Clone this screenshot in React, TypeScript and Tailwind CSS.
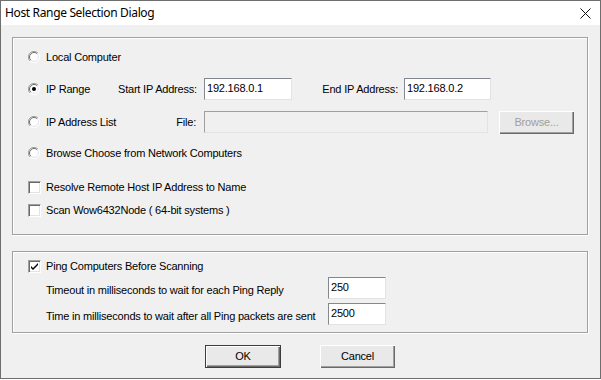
import React from "react"

function Radio({ checked = false }: { checked?: boolean }) {
  return (
    <svg width="12" height="12" viewBox="0 0 12 12" className="shrink-0">
      <circle cx="6" cy="6" r="5.5" fill="#ffffff" />
      <path d="M10 2 A5.5 5.5 0 0 0 2 10" stroke="#a0a0a0" strokeWidth="1" fill="none" />
      <path d="M2 10 A5.5 5.5 0 0 0 10 2" stroke="#ffffff" strokeWidth="1" fill="none" />
      <path d="M9.2 2.8 A4.5 4.5 0 0 0 2.8 9.2" stroke="#696969" strokeWidth="1" fill="none" />
      <path d="M2.8 9.2 A4.5 4.5 0 0 0 9.2 2.8" stroke="#e3e3e3" strokeWidth="1" fill="none" />
      {checked && <circle cx="6" cy="6" r="2" fill="#000000" />}
    </svg>
  )
}

function Check({ checked = false }: { checked?: boolean }) {
  return (
    <div className="w-[13px] h-[13px] shrink-0 bg-white border-t border-l border-[#a0a0a0] border-b border-r border-b-white border-r-white shadow-[inset_1px_1px_0_#696969,inset_-1px_-1px_0_#e3e3e3] flex items-center justify-center">
      {checked && (
        <svg width="9" height="9" viewBox="0 0 9 9">
          <path d="M1 4 L3 6 L8 1 L8 3 L3 8 L1 6 Z" fill="#000000" />
        </svg>
      )}
    </div>
  )
}

function Field({ value, className }: { value?: string; className: string }) {
  return (
    <div
      className={`h-[22px] bg-white border-t border-l border-[#828790] border-b border-r border-b-[#e3e3e3] border-r-[#e3e3e3] pl-[2px] pt-[2px] leading-[14px] ${className}`}
    >
      {value}
    </div>
  )
}

function Button({ label, primary = false, disabled = false, className = "" }: { label: string; primary?: boolean; disabled?: boolean; className?: string }) {
  return (
    <div
      className={`h-[23px] w-[75px] bg-[#e9e9e9] flex items-center justify-center ${
        primary
          ? "border border-[#3c3c3c] shadow-[inset_1px_1px_0_#ffffff,inset_-1px_-1px_0_#696969,inset_-2px_-2px_0_#a0a0a0]"
          : "shadow-[inset_1px_1px_0_#ffffff,inset_-1px_-1px_0_#696969,inset_-2px_-2px_0_#a0a0a0]"
      } ${disabled ? "text-[#a0a0a0]" : "text-black"} ${className}`}
    >
      {label}
    </div>
  )
}

const groupBox =
  "ml-[11px] w-[576px] border border-[#a0a0a0] shadow-[inset_1px_1px_0_#ffffff,1px_1px_0_#ffffff]"

export default function App() {
  return (
    <div className="w-[601px] h-[380px] bg-white">
      <div
        className="w-[601px] h-[379px] border border-[#6e6e6e] bg-[#f0f0f0] flex flex-col text-[11px] tracking-[-0.2px] text-black"
        style={{ fontFamily: '"Liberation Sans", Arial, sans-serif' }}
      >
        {/* title bar */}
        <div className="h-[24px] bg-white flex items-center justify-between pl-[4px] pr-[9px] shrink-0">
          <span className="text-[12px] tracking-[-0.35px] text-black" style={{ fontFamily: '"Noto Sans", sans-serif' }}>
            Host Range Selection Dialog
          </span>
          <svg width="11" height="11" viewBox="0 0 11 11">
            <path d="M0.5 0.5 L10.5 10.5 M10.5 0.5 L0.5 10.5" stroke="#111111" strokeWidth="1" />
          </svg>
        </div>

        {/* host selection group */}
        <div className={`${groupBox} mt-[12px] h-[198px] pl-[15px] flex flex-col`}>
          <div className="mt-[8px] h-[22px] flex items-center">
            <Radio />
            <span className="ml-[6px]">Local Computer</span>
          </div>

          <div className="mt-[10px] h-[22px] flex items-center">
            <div className="w-[90px] flex items-center">
              <Radio checked />
              <span className="ml-[6px]">IP Range</span>
            </div>
            <div className="w-[86px] text-right pr-[8px] whitespace-nowrap">Start IP Address:</div>
            <Field value="192.168.0.1" className="w-[88px]" />
            <div className="w-[112px] text-right pr-[6px] whitespace-nowrap">End IP Address:</div>
            <Field value="192.168.0.2" className="w-[87px]" />
          </div>

          <div className="mt-[11px] h-[22px] flex items-center">
            <div className="w-[90px] flex items-center">
              <Radio />
              <span className="ml-[6px] whitespace-nowrap">IP Address List</span>
            </div>
            <div className="w-[86px] text-right pr-[8px]">File:</div>
            <div className="w-[284px] h-[22px] bg-[#f0f0f0] border-t border-l border-[#a0a0a0] border-b border-r border-b-[#e3e3e3] border-r-[#e3e3e3]" />
            <Button label="Browse..." disabled className="ml-[11px] h-[22px] w-[75px]" />
          </div>

          <div className="mt-[9px] h-[22px] flex items-center">
            <Radio />
            <span className="ml-[6px]">Browse Choose from Network Computers</span>
          </div>

          <div className="mt-[12px] h-[22px] flex items-center">
            <Check />
            <span className="ml-[5px]">Resolve Remote Host IP Address to Name</span>
          </div>

          <div className="mt-[1px] h-[22px] flex items-center">
            <Check />
            <span className="ml-[5px]">Scan Wow6432Node ( 64-bit systems )</span>
          </div>
        </div>

        {/* ping group */}
        <div className={`${groupBox} mt-[16px] h-[82px] pl-[15px] flex flex-col`}>
          <div className="mt-[4px] h-[21px] flex items-center">
            <Check checked />
            <span className="ml-[5px]">Ping Computers Before Scanning</span>
          </div>
          <div className="h-[22px] flex items-center">
            <span className="ml-[18px] w-[282px] pt-[4px] whitespace-nowrap">Timeout in milliseconds to wait for each Ping Reply</span>
            <Field value="250" className="w-[58px]" />
          </div>
          <div className="mt-[4px] h-[22px] flex items-center">
            <span className="ml-[18px] w-[282px] pt-[4px] whitespace-nowrap">Time in milliseconds to wait after all Ping packets are sent</span>
            <Field value="2500" className="w-[58px]" />
          </div>
        </div>

        {/* buttons */}
        <div className="mt-[12px] flex pl-[204px] gap-[39px]">
          <Button label="OK" primary className="w-[76px]" />
          <Button label="Cancel" className="w-[75px]" />
        </div>
      </div>
    </div>
  )
}
